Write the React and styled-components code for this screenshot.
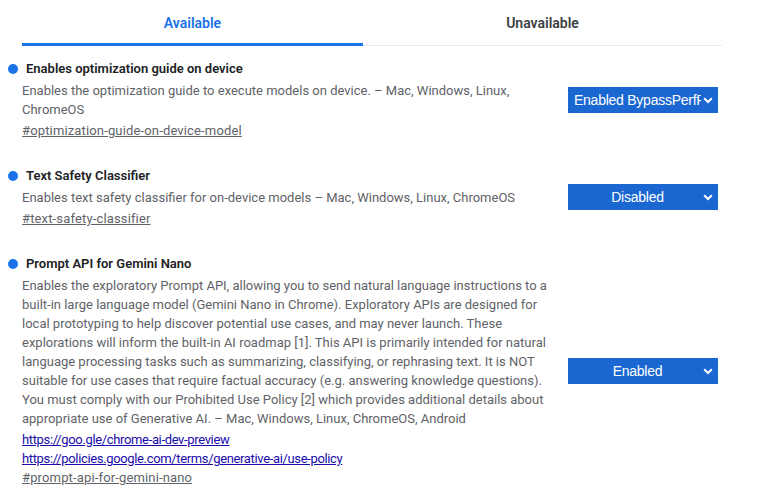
import React from "react";
import styled, { createGlobalStyle } from "styled-components";

const Global = createGlobalStyle`
  html, body { margin: 0; padding: 0; background: #ffffff; }
  body { font-family: Roboto, "Noto Sans", sans-serif; }
`;

const Page = styled.div`
  width: 758px;
  height: 496px;
  overflow: hidden;
  padding: 0 36px 0 22px;
  box-sizing: border-box;
`;

const Tabs = styled.div`
  display: grid;
  grid-template-columns: 341px 1fr;
  border-bottom: 1px solid #e8eaed;
  height: 46px;
  box-sizing: border-box;
`;

const Tab = styled.div`
  display: flex;
  align-items: center;
  justify-content: center;
  font-size: 14px;
  font-weight: 600;
  color: ${(p) => (p.$active ? "#1a73e8" : "#3c4043")};
  border-bottom: 3px solid ${(p) => (p.$active ? "#1a73e8" : "transparent")};
  margin-bottom: -1px;
  padding-top: 2px;
`;

const List = styled.div`
  display: flex;
  flex-direction: column;
  gap: 26px;
  padding-top: 13px;
`;

const Entry = styled.div`
  display: grid;
  grid-template-columns: 1fr 150px;
  column-gap: 20px;
  align-items: center;
  margin-right: 4px;
`;

const Body = styled.div`
  display: flex;
  flex-direction: column;
`;

const Header = styled.div`
  display: flex;
  align-items: center;
  gap: 8px;
  margin-left: -14px;
`;

const Dot = styled.span`
  width: 10px;
  height: 10px;
  border-radius: 50%;
  background: #1a73e8;
  flex: none;
`;

const Title = styled.div`
  font-size: 13px;
  font-weight: 600;
  line-height: 20px;
  color: #202124;
`;

const Desc = styled.p`
  margin: 2px 0 0;
  font-size: 13px;
  line-height: 19px;
  color: #5f6368;
`;

const Links = styled.div`
  display: flex;
  flex-direction: column;
  margin-top: 2px;
`;

const Link = styled.a`
  font-size: 13px;
  line-height: 19px;
  color: ${(p) => (p.$hash ? "#5f6368" : "#1a0dab")};
  letter-spacing: ${(p) => (p.$hash ? "0.15px" : "-0.35px")};
  text-decoration: underline;
  align-self: flex-start;
`;

const Select = styled.div`
  position: relative;
  height: 26px;
  background: #1a67d2;
  color: #ffffff;
  font-family: "Liberation Sans", Arial, sans-serif;
  font-size: 14px;
  letter-spacing: -0.25px;
  display: flex;
  align-items: center;
  padding: 0 17px 0 6px;
  box-sizing: border-box;
`;

const SelectText = styled.span`
  flex: 1;
  min-width: 0;
  overflow: hidden;
  white-space: nowrap;
  text-align: center;
`;

const Chevron = styled.svg`
  position: absolute;
  right: 5px;
  top: 10px;
`;

const entries = [
  {
    title: "Enables optimization guide on device",
    desc: "Enables the optimization guide to execute models on device. – Mac, Windows, Linux, ChromeOS",
    links: [],
    hash: "#optimization-guide-on-device-model",
    value: "Enabled BypassPerfRequirement",
  },
  {
    title: "Text Safety Classifier",
    desc: "Enables text safety classifier for on-device models – Mac, Windows, Linux, ChromeOS",
    links: [],
    hash: "#text-safety-classifier",
    value: "Disabled",
  },
  {
    title: "Prompt API for Gemini Nano",
    desc: "Enables the exploratory Prompt API, allowing you to send natural language instructions to a built-in large language model (Gemini Nano in Chrome). Exploratory APIs are designed for local prototyping to help discover potential use cases, and may never launch. These explorations will inform the built-in AI roadmap [1]. This API is primarily intended for natural language processing tasks such as summarizing, classifying, or rephrasing text. It is NOT suitable for use cases that require factual accuracy (e.g. answering knowledge questions). You must comply with our Prohibited Use Policy [2] which provides additional details about appropriate use of Generative AI. – Mac, Windows, Linux, ChromeOS, Android",
    links: [
      "https://goo.gle/chrome-ai-dev-preview",
      "https://policies.google.com/terms/generative-ai/use-policy",
    ],
    hash: "#prompt-api-for-gemini-nano",
    value: "Enabled",
  },
];

export default function App() {
  return (
    <>
      <Global />
      <Page>
        <Tabs>
          <Tab $active>Available</Tab>
          <Tab>Unavailable</Tab>
        </Tabs>
        <List>
          {entries.map((e) => (
            <Entry key={e.hash}>
              <Body>
                <Header>
                  <Dot />
                  <Title>{e.title}</Title>
                </Header>
                <Desc>{e.desc}</Desc>
                <Links>
                  {e.links.map((l) => (
                    <Link key={l} href="#">{l}</Link>
                  ))}
                  <Link $hash href="#">{e.hash}</Link>
                </Links>
              </Body>
              <Select>
                <SelectText>{e.value}</SelectText>
                <Chevron width="10" height="7" viewBox="0 0 10 7">
                  <path d="M1.2 1.3 L5 5 L8.8 1.3" fill="none" stroke="#fff" strokeWidth="2" />
                </Chevron>
              </Select>
            </Entry>
          ))}
        </List>
      </Page>
    </>
  );
}
